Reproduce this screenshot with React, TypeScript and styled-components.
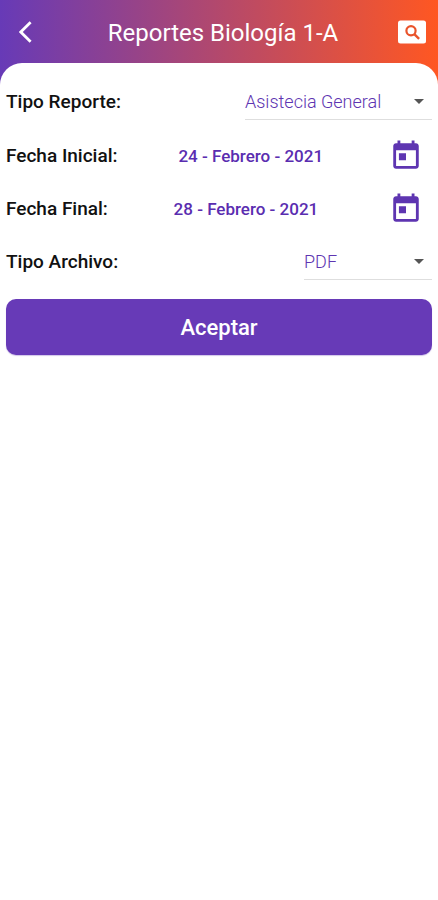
import React from "react";
import styled, { createGlobalStyle } from "styled-components";

const GlobalStyle = createGlobalStyle`
  *, *::before, *::after { box-sizing: border-box; }
  body {
    margin: 0;
    background: #ffffff;
    font-family: Roboto, "Liberation Sans", sans-serif;
  }
  button, select { font-family: inherit; }
`;

const Screen = styled.div`
  min-height: 100vh;
  display: flex;
  flex-direction: column;
  background: linear-gradient(90deg, #673ab7, #ff5722);
`;

const Header = styled.header`
  height: 63px;
  padding: 0 6px;
  display: flex;
  align-items: center;
  color: #ffffff;
`;

const Title = styled.h1`
  flex: 1;
  margin: 0;
  padding: 2px 0 0 8px;
  text-align: center;
  font-size: 24px;
  font-weight: 400;
  line-height: 32px;
  white-space: nowrap;
`;

const IconButton = styled.button`
  width: 40px;
  height: 48px;
  padding: 0;
  border: 0;
  background: none;
  color: inherit;
  display: flex;
  align-items: center;
  justify-content: center;
  cursor: pointer;
`;

const Sheet = styled.main`
  flex: 1;
  padding: 12px 6px;
  border-radius: 22px 22px 0 0;
  background: #ffffff;
`;

const Form = styled.form`
  display: flex;
  flex-direction: column;
`;

const Row = styled.div<{ $date?: boolean }>`
  height: ${(p) => (p.$date ? "53px" : "54px")};
  display: flex;
  align-items: center;
  justify-content: space-between;
`;

const Label = styled.label`
  font-size: 19px;
  font-weight: 500;
  line-height: 24px;
  color: #111111;
  white-space: nowrap;
`;

const DateText = styled.output`
  font-size: 17px;
  font-weight: 500;
  line-height: 24px;
  color: #5a2db0;
  white-space: nowrap;
`;

const DateButton = styled(IconButton)`
  width: 48px;
  padding-right: 4px;
  color: #5e35b1;
`;

const SelectBox = styled.div<{ $compact?: boolean }>`
  width: ${(p) => (p.$compact ? "128px" : "187px")};
  height: 36px;
  display: grid;
  align-items: center;
  border-bottom: 1px solid #dedede;

  & > * { grid-area: 1 / 1; }

  & > svg {
    justify-self: end;
    margin-right: 8px;
    pointer-events: none;
  }
`;

const Select = styled.select`
  width: 100%;
  height: 35px;
  padding: 0 28px 0 0;
  border: 0;
  background: transparent;
  appearance: none;
  font-size: 18px;
  font-weight: 300;
  line-height: 24px;
  color: #5e35b1;
`;

const Submit = styled.button`
  height: 56px;
  margin-top: 10px;
  padding: 2px 0 0;
  border: 0;
  border-radius: 10px;
  background: #673ab7;
  color: #ffffff;
  font-size: 22px;
  font-weight: 500;
  line-height: 28px;
  box-shadow: 0 1px 1px rgba(103, 58, 183, 0.3);
  cursor: pointer;
`;

const BackIcon = () => (
  <svg width="14" height="24" viewBox="0 0 14 24" fill="none" aria-hidden="true">
    <path d="M11.6 2.2 1.8 12 11.6 21.8" stroke="currentColor" strokeWidth="2.8" />
  </svg>
);

const SearchIcon = () => (
  <svg width="28" height="24" viewBox="0 0 28 24" fill="none" aria-hidden="true">
    <rect width="28" height="23" y="0.5" rx="2.5" fill="#ffffff" />
    <circle cx="13" cy="10.8" r="4.6" stroke="#e9532b" strokeWidth="2.2" />
    <path d="m16.3 14.1 4.8 4.8" stroke="#e9532b" strokeWidth="2.4" />
  </svg>
);

const CalendarIcon = () => (
  <svg width="34" height="34" viewBox="0 0 24 24" fill="currentColor" aria-hidden="true">
    <path d="M19 3h-1V1h-2v2H8V1H6v2H5c-1.11 0-1.99.9-1.99 2L3 19c0 1.1.89 2 2 2h14c1.1 0 2-.9 2-2V5c0-1.1-.9-2-2-2zm0 16H5V8h14v11zM7 10h5v5H7z" />
  </svg>
);

const ArrowIcon = () => (
  <svg width="10" height="5" viewBox="0 0 10 5" aria-hidden="true">
    <path d="M0 0h10L5 5z" fill="#555555" />
  </svg>
);

type SelectRowProps = { id: string; label: string; options: string[]; compact?: boolean };

const SelectRow = ({ id, label, options, compact }: SelectRowProps) => (
  <Row>
    <Label htmlFor={id}>{label}</Label>
    <SelectBox $compact={compact}>
      <Select id={id} defaultValue={options[0]}>
        {options.map((o) => (
          <option key={o}>{o}</option>
        ))}
      </Select>
      <ArrowIcon />
    </SelectBox>
  </Row>
);

const DateRow = ({ id, label, value }: { id: string; label: string; value: string }) => (
  <Row $date>
    <Label htmlFor={id}>{label}</Label>
    <DateText>{value}</DateText>
    <DateButton id={id} type="button">
      <CalendarIcon />
    </DateButton>
  </Row>
);

export default function App() {
  return (
    <>
      <GlobalStyle />
      <Screen>
        <Header>
          <IconButton type="button" aria-label="Volver">
            <BackIcon />
          </IconButton>
          <Title>Reportes Biología 1-A</Title>
          <IconButton type="button" aria-label="Buscar">
            <SearchIcon />
          </IconButton>
        </Header>
        <Sheet>
          <Form onSubmit={(e) => e.preventDefault()}>
            <SelectRow id="tipo-reporte" label="Tipo Reporte:" options={["Asistecia General"]} />
            <DateRow id="fecha-inicial" label="Fecha Inicial:" value="24 - Febrero - 2021" />
            <DateRow id="fecha-final" label="Fecha Final:" value="28 - Febrero - 2021" />
            <SelectRow id="tipo-archivo" label="Tipo Archivo:" options={["PDF"]} compact />
            <Submit type="submit">Aceptar</Submit>
          </Form>
        </Sheet>
      </Screen>
    </>
  );
}
